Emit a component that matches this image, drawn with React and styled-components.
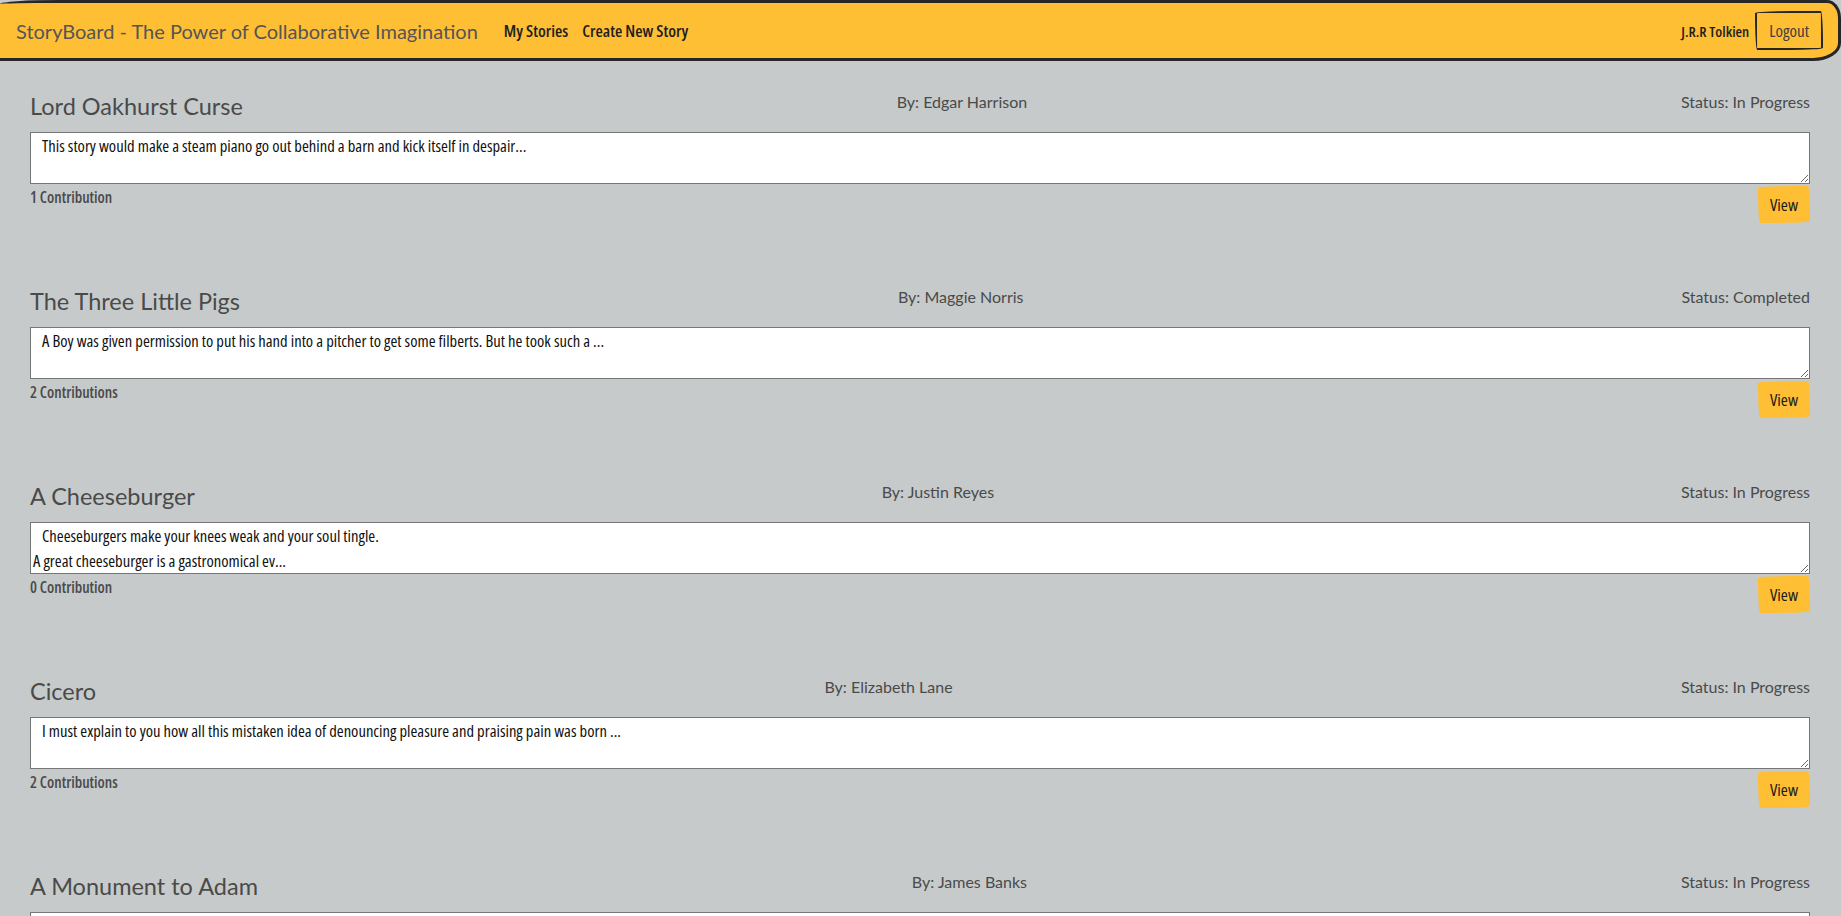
import React from "react";
import styled, { createGlobalStyle } from "styled-components";

const GlobalStyle = createGlobalStyle`
  html, body {
    margin: 0;
    padding: 0;
    background: #c6cacb;
  }
  body {
    font-family: Lato, "Open Sans", sans-serif;
    color: #41403e;
  }
  * { box-sizing: border-box; }
`;

const hand = `"Open Sans", "DejaVu Sans Condensed", sans-serif`;

const NavBar = styled.nav`
  display: flex;
  align-items: center;
  height: 61px;
  padding: 0 15px 0 16px;
  background: #ffbf35;
  border: 3px solid #262626;
  border-left: none;
  border-radius: 60px 14px 28px 0 / 4px 18px 18px 0;
`;

const Brand = styled.a`
  font-family: Lato, sans-serif;
  font-size: 20px;
  color: #555555;
  text-decoration: none;
  margin-right: 26px;
`;

const NavLinks = styled.div`
  display: flex;
  gap: 14px;
  flex: 1;
`;

const NavLink = styled.a`
  font-family: ${hand};
  font-stretch: 80%;
  font-size: 16.8px;
  font-weight: 600;
  color: #1e1e1e;
  text-decoration: none;
`;

const UserArea = styled.div`
  display: flex;
  align-items: center;
  gap: 6px;
`;

const UserName = styled.span`
  font-family: ${hand};
  font-stretch: 75%;
  font-size: 15px;
  font-weight: 600;
  color: #1e1e1e;
`;

const LogoutButton = styled.button`
  font-family: ${hand};
  font-stretch: 80%;
  font-size: 17px;
  color: #41403e;
  background: transparent;
  border: 2px solid #262626;
  height: 39px;
  padding: 0 12px;
  border-radius: 255px 15px 225px 15px / 15px 225px 15px 255px;
  cursor: pointer;
`;

const Main = styled.main`
  display: flex;
  flex-direction: column;
  gap: 63px;
  padding: 30px 31px 40px 30px;
`;

const Story = styled.section`
  display: flex;
  flex-direction: column;
`;

const StoryHeader = styled.header`
  display: flex;
  justify-content: space-between;
  align-items: flex-start;
`;

const Title = styled.h2`
  margin: 0;
  font-family: Lato, sans-serif;
  font-weight: 400;
  font-size: 23.5px;
  line-height: 29px;
  padding-top: 1px;
  color: #4a4a4a;
`;

const Meta = styled.span`
  font-family: Lato, sans-serif;
  font-size: 16px;
  line-height: 20px;
  padding-top: 1px;
  color: #4a4a4a;
`;

const Excerpt = styled.textarea`
  display: block;
  width: 100%;
  margin-top: 11px;
  height: 52px;
  padding: 0 2px;
  border: 1px solid #767676;
  background: #ffffff;
  font-family: ${hand};
  font-stretch: 80%;
  font-size: 16.6px;
  line-height: 25px;
  color: #111111;
  text-indent: 9px;
  resize: vertical;
`;

const FooterRow = styled.div`
  display: flex;
  justify-content: space-between;
  align-items: flex-start;
  margin-top: 2px;
`;

const Contributions = styled.span`
  font-family: ${hand};
  font-stretch: 80%;
  font-size: 15.6px;
  font-weight: 600;
  color: #4a4a4a;
`;

const ViewButton = styled.button`
  font-family: ${hand};
  font-stretch: 80%;
  font-size: 17px;
  line-height: 19px;
  padding: 9px 12px;
  color: #1a1a1a;
  background: #ffbf35;
  border: none;
  border-radius: 255px 15px 225px 15px / 15px 225px 15px 255px;
  cursor: pointer;
`;

const stories = [
  {
    title: "Lord Oakhurst Curse",
    author: "Edgar Harrison",
    status: "In Progress",
    text: "This story would make a steam piano go out behind a barn and kick itself in despair...",
    count: "1 Contribution",
  },
  {
    title: "The Three Little Pigs",
    author: "Maggie Norris",
    status: "Completed",
    text: "A Boy was given permission to put his hand into a pitcher to get some filberts. But he took such a ...",
    count: "2 Contributions",
  },
  {
    title: "A Cheeseburger",
    author: "Justin Reyes",
    status: "In Progress",
    text: "Cheeseburgers make your knees weak and your soul tingle.\nA great cheeseburger is a gastronomical ev...",
    count: "0 Contribution",
  },
  {
    title: "Cicero",
    author: "Elizabeth Lane",
    status: "In Progress",
    text: "I must explain to you how all this mistaken idea of denouncing pleasure and praising pain was born ...",
    count: "2 Contributions",
  },
  {
    title: "A Monument to Adam",
    author: "James Banks",
    status: "In Progress",
    text: "A monument to Adam, the father of mankind, stands proudly in the square...",
    count: "1 Contribution",
  },
];

export default function App() {
  return (
    <>
      <GlobalStyle />
      <NavBar>
        <Brand href="#">StoryBoard - The Power of Collaborative Imagination</Brand>
        <NavLinks>
          <NavLink href="#">My Stories</NavLink>
          <NavLink href="#">Create New Story</NavLink>
        </NavLinks>
        <UserArea>
          <UserName>J.R.R Tolkien</UserName>
          <LogoutButton>Logout</LogoutButton>
        </UserArea>
      </NavBar>
      <Main>
        {stories.map((s) => (
          <Story key={s.title}>
            <StoryHeader>
              <Title>{s.title}</Title>
              <Meta>By: {s.author}</Meta>
              <Meta>Status: {s.status}</Meta>
            </StoryHeader>
            <Excerpt readOnly value={s.text} />
            <FooterRow>
              <Contributions>{s.count}</Contributions>
              <ViewButton>View</ViewButton>
            </FooterRow>
          </Story>
        ))}
      </Main>
    </>
  );
}
